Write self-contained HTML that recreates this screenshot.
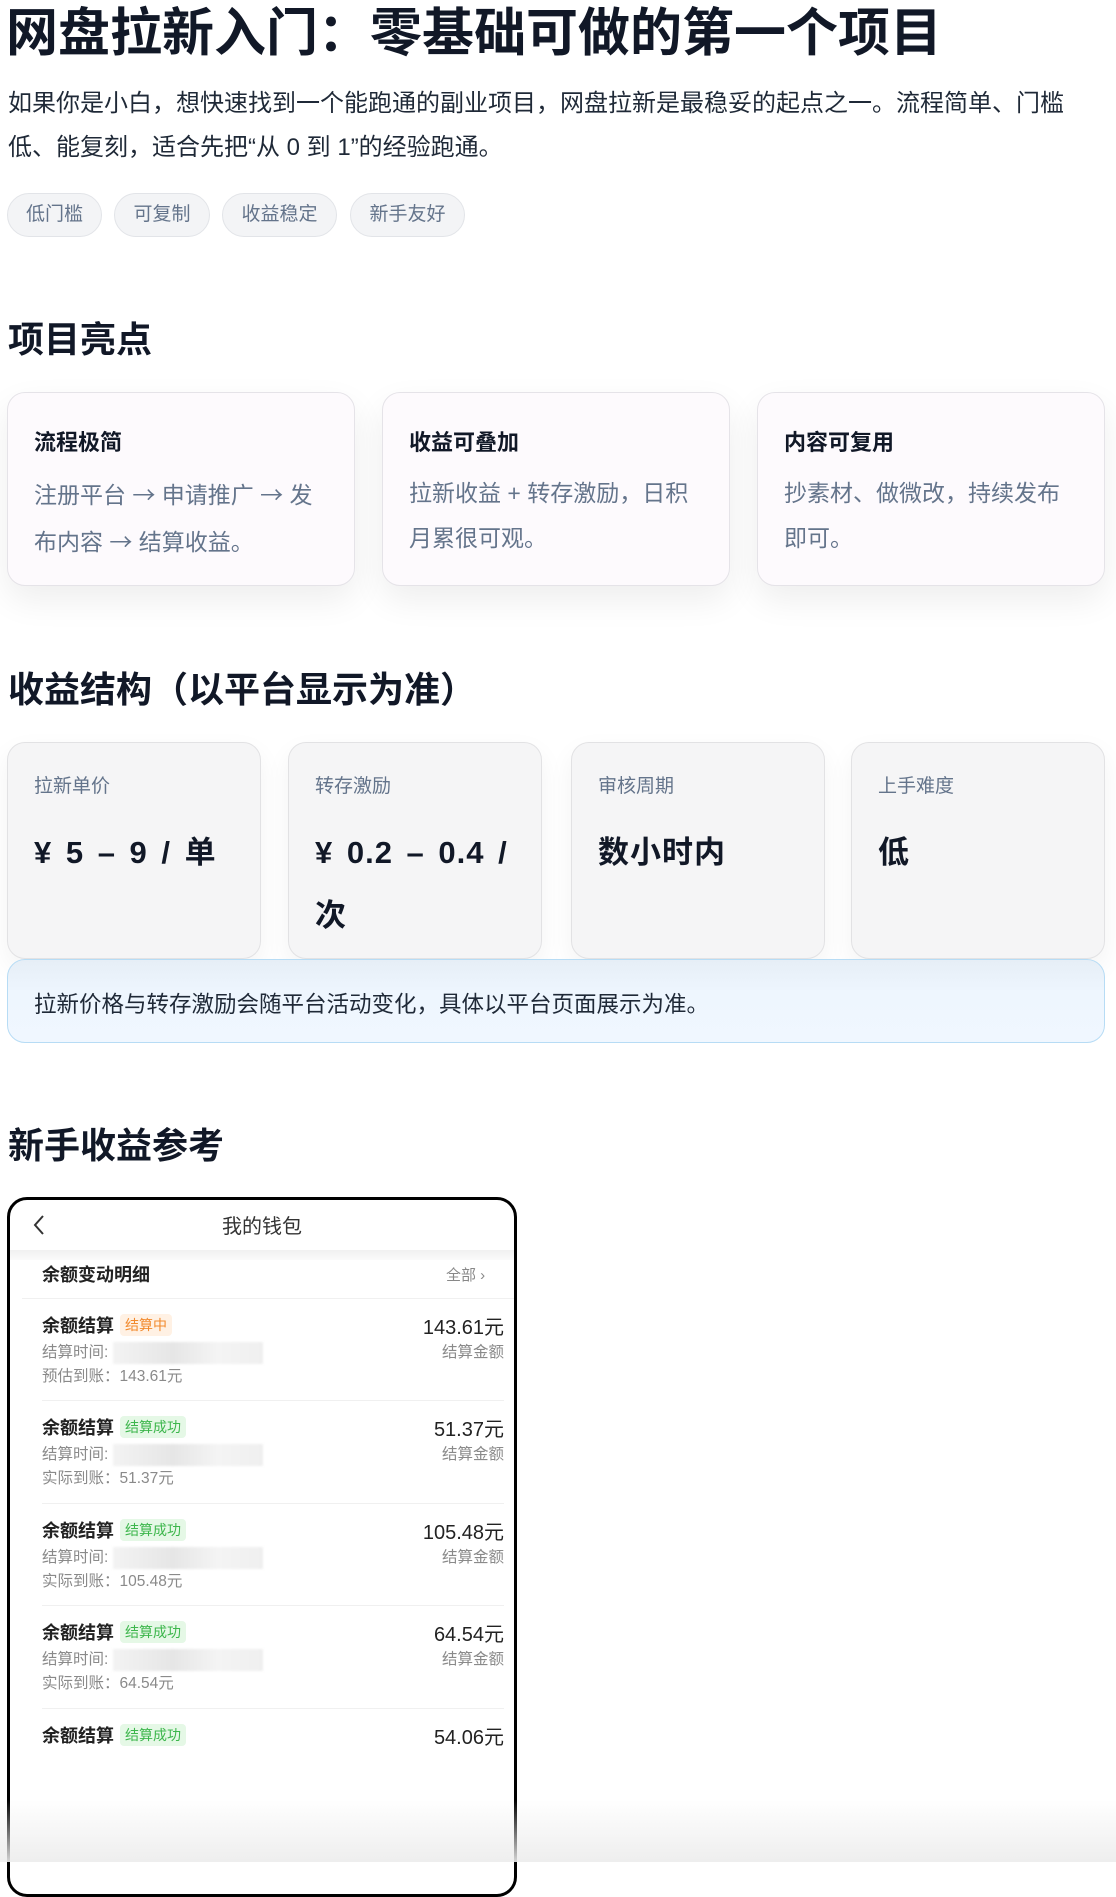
<!DOCTYPE html>
<html><head><meta charset="utf-8"><style>
*{margin:0;padding:0;box-sizing:border-box}
body{width:1116px;height:1862px;overflow:hidden;background:#fff;font-family:"Liberation Sans","Noto Sans CJK SC",sans-serif;color:#0f172a;position:relative}
.a{position:absolute;white-space:nowrap}
h1{position:absolute;left:6px;top:4px;font-size:52px;font-weight:700;line-height:60px;color:#111827}
.p{position:absolute;left:8px;top:82px;font-size:24px;line-height:44px;color:#1f2937;width:1072px}
.tag{position:absolute;top:193px;height:44px;border:1px solid #e2e4e8;background:#f3f4f6;border-radius:22px;font-size:19px;color:#64748b;line-height:42px;text-align:center}
h2{position:absolute;left:8px;font-size:36px;font-weight:700;line-height:44px;color:#111827}
.card{position:absolute;top:392px;width:348px;height:194px;background:#fdfafd;border:1px solid #e5e3e8;border-radius:18px;box-shadow:0 14px 34px rgba(0,0,0,.07)}
.card b{position:absolute;left:26px;top:32px;font-size:22px;color:#111827}
.card p{position:absolute;left:26px;top:78px;width:292px;font-size:23px;line-height:45px;color:#64748b}
.ar{font-family:"Noto Sans CJK SC",sans-serif}
.st{position:absolute;top:742px;width:254px;height:217px;background:#f5f5f6;border:1px solid #e2e2e4;border-radius:18px;box-shadow:0 10px 26px rgba(0,0,0,.05)}
.st span{position:absolute;left:26px;top:28px;font-size:19px;color:#64748b}
.st b{position:absolute;left:26px;top:78px;width:205px;font-size:31px;font-weight:600;word-spacing:4px;letter-spacing:1px;line-height:63px;color:#111827;white-space:normal}
.note{position:absolute;left:7px;top:959px;width:1098px;height:84px;border:1px solid #b7dcf5;border-radius:18px;background:linear-gradient(#e6eef6,#eef6fe 40%,#f0f7ff);font-size:22.5px;color:#1f2937;padding:27px 26px}
.ph{position:absolute;left:7px;top:1197px;width:510px;height:700px;border:3px solid #000;border-radius:20px;background:#fff;overflow:hidden}
.row{position:absolute;left:32px;width:462px;height:103px}
.row .t{position:absolute;left:0;top:-2px;font-size:18px;font-weight:700;color:#222}
.bd{display:inline-block;font-size:14px;font-weight:400;padding:1px 5px;border-radius:4px;margin-left:6px;vertical-align:2px}
.o{background:#fff1e4;color:#f28a2e}.g{background:#e5f8e6;color:#3db64c}
.row .s{position:absolute;left:0;font-size:15.5px;color:#8a8a8a}
.row .m{position:absolute;right:0;top:-3px;font-size:20px;color:#222}
.row .k{position:absolute;right:0;top:26px;font-size:15.5px;color:#8a8a8a}
.blur{display:inline-block;width:150px;height:22px;vertical-align:middle;background:linear-gradient(90deg,#f3f3f3,#e6e6e6 40%,#f4f4f4 70%,#efefef);filter:blur(1px)}
.dv{position:absolute;left:32px;width:462px;height:1px;background:#f0f0f0}
</style></head><body>
<h1>网盘拉新入门：零基础可做的第一个项目</h1>
<div class="p">如果你是小白，想快速找到一个能跑通的副业项目，网盘拉新是最稳妥的起点之一。流程简单、门槛<br>低、能复刻，适合先把“从 0 到 1”的经验跑通。</div>
<div class="tag" style="left:7px;width:95px">低门槛</div>
<div class="tag" style="left:114px;width:96px">可复制</div>
<div class="tag" style="left:222px;width:115px">收益稳定</div>
<div class="tag" style="left:350px;width:115px">新手友好</div>

<h2 style="top:318px">项目亮点</h2>
<div class="card" style="left:7px"><b>流程极简</b><p>注册平台 <span class="ar">→</span> 申请推广 <span class="ar">→</span> 发布内容 <span class="ar">→</span> 结算收益。</p></div>
<div class="card" style="left:382px"><b>收益可叠加</b><p>拉新收益 + 转存激励，日积<br>月累很可观。</p></div>
<div class="card" style="left:757px"><b>内容可复用</b><p>抄素材、做微改，持续发布<br>即可。</p></div>

<h2 style="top:668px">收益结构（以平台显示为准）</h2>
<div class="st" style="left:7px"><span>拉新单价</span><b>¥ 5 – 9 / 单</b></div>
<div class="st" style="left:288px"><span>转存激励</span><b>¥ 0.2 – 0.4 /<br>次</b></div>
<div class="st" style="left:571px"><span>审核周期</span><b>数小时内</b></div>
<div class="st" style="left:851px"><span>上手难度</span><b>低</b></div>
<div class="note">拉新价格与转存激励会随平台活动变化，具体以平台页面展示为准。</div>

<h2 style="top:1124px">新手收益参考</h2>
<div class="ph">
 <svg class="a" style="left:22px;top:14px" width="14" height="22" viewBox="0 0 14 22"><path d="M11 2 L3 11 L11 20" stroke="#333" stroke-width="2" fill="none"/></svg>
 <div class="a" style="left:0;width:504px;text-align:center;top:10px;font-size:20px;color:#333">我的钱包</div>
 <div class="a" style="left:0;top:50px;width:504px;height:10px;background:linear-gradient(#f0f0f0,#fafafa)"></div>
 <div class="a" style="left:32px;top:61px;font-size:18px;font-weight:700;color:#222">余额变动明细</div>
 <div class="a" style="left:436px;top:64px;font-size:15px;color:#888">全部 ›</div>
 <div class="dv" style="top:98px;left:12px;width:492px"></div>
 <div class="row" style="top:114px"><div class="t">余额结算<span class="bd o">结算中</span></div><div class="s" style="top:26px">结算时间: <span class="blur"></span></div><div class="s" style="top:50px">预估到账：143.61元</div><div class="m">143.61元</div><div class="k">结算金额</div></div>
 <div class="dv" style="top:200px"></div>
 <div class="row" style="top:216px"><div class="t">余额结算<span class="bd g">结算成功</span></div><div class="s" style="top:26px">结算时间: <span class="blur"></span></div><div class="s" style="top:50px">实际到账：51.37元</div><div class="m">51.37元</div><div class="k">结算金额</div></div>
 <div class="dv" style="top:303px"></div>
 <div class="row" style="top:319px"><div class="t">余额结算<span class="bd g">结算成功</span></div><div class="s" style="top:26px">结算时间: <span class="blur"></span></div><div class="s" style="top:50px">实际到账：105.48元</div><div class="m">105.48元</div><div class="k">结算金额</div></div>
 <div class="dv" style="top:405px"></div>
 <div class="row" style="top:421px"><div class="t">余额结算<span class="bd g">结算成功</span></div><div class="s" style="top:26px">结算时间: <span class="blur"></span></div><div class="s" style="top:50px">实际到账：64.54元</div><div class="m">64.54元</div><div class="k">结算金额</div></div>
 <div class="dv" style="top:508px"></div>
 <div class="row" style="top:524px"><div class="t">余额结算<span class="bd g">结算成功</span></div><div class="m">54.06元</div></div>
</div>
<div class="a" style="left:0;top:1800px;width:1116px;height:62px;background:linear-gradient(rgba(238,238,238,0),rgba(236,236,236,.9));pointer-events:none"></div>
</body></html>
